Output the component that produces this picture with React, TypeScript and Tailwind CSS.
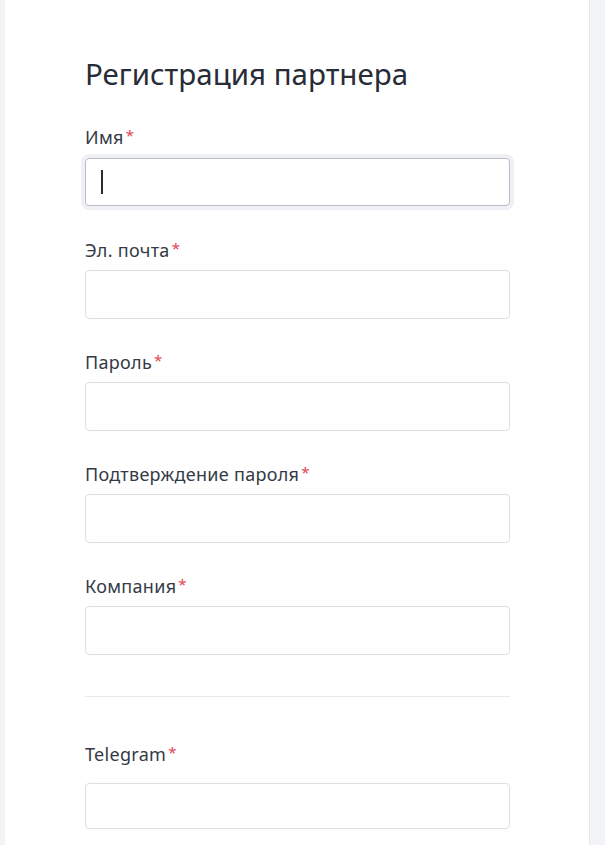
const fields = ['Эл. почта', 'Пароль', 'Подтверждение пароля', 'Компания'];

function Label({ children }: { children: string }) {
  return (
    <label className="block h-6 text-[18px] leading-6 tracking-[0.3px] text-[#343a46]">
      {children}
      <span className="ml-[2px] text-[#e3444f] relative -top-[3px] text-[15px] leading-none">*</span>
    </label>
  );
}

export default function App() {
  return (
    <div className="min-h-[845px] bg-[#f3f4f8] pl-[5px] pr-[15px]" style={{ fontFamily: '"Noto Sans", "Open Sans", sans-serif' }}>
      <div className="min-h-[845px] bg-white border-r border-[#e4e6eb] pl-[80px] pr-[79px] pt-[52px]">
        <h1 className="h-[44px] text-[29.5px] leading-[44px] text-[#272c36] font-normal">Регистрация партнера</h1>

        <div className="mt-[29px]">
          <Label>Имя</Label>
          <div className="mt-[9px] h-[48px] rounded-[4px] border border-[#babdc6] shadow-[0_0_0_4px_#eff0f5] flex items-center pl-[15px]">
            <span className="block w-[1.5px] h-[24px] bg-[#2a2d34]"></span>
          </div>
        </div>

        {fields.map((f, i) => (
          <div key={f} className={i === 0 ? 'mt-[32px]' : 'mt-[31px]'}>
            <Label>{f}</Label>
            <input className="mt-[8px] block w-full h-[49px] rounded-[4px] border border-[#dcdfe4] outline-none" />
          </div>
        ))}

        <hr className="mt-[41px] border-0 border-t border-[#e8eaee]" />

        <div className="mt-[45px]">
          <Label>Telegram</Label>
          <input className="mt-[17px] block w-full h-[46px] rounded-[4px] border border-[#dcdfe4] outline-none" />
        </div>
      </div>
    </div>
  );
}
